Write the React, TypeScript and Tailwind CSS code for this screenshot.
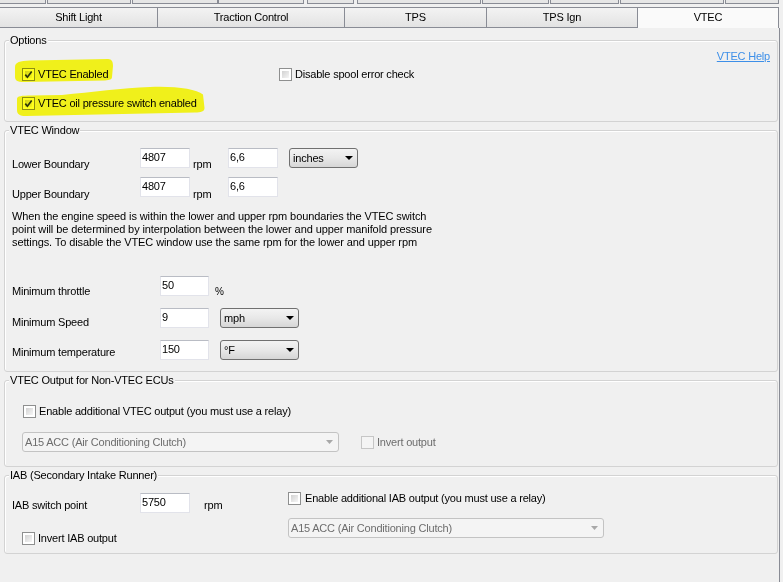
import React from "react";

function Check({ checked = false, disabled = false }: { checked?: boolean; disabled?: boolean }) {
  return (
    <span
      className={
        disabled
          ? "relative block h-[13px] w-[13px] shrink-0 border border-[#c6c6c6] bg-[#f4f4f4]"
          : "relative block h-[13px] w-[13px] shrink-0 border border-[#8e8f8f] bg-white"
      }
    >
      {!disabled && (
        <span className="absolute inset-[2px] bg-gradient-to-br from-[#d2d2d2] to-[#f6f6f6]" />
      )}
      {checked && (
        <svg className="absolute left-0 top-0" width="11" height="11" viewBox="0 0 11 11">
          <path d="M2.3 5.6 L4.4 8.2 L8.7 2.4" stroke="#2b3550" strokeWidth="1.7" fill="none" />
        </svg>
      )}
    </span>
  );
}

function Field({ className, children }: { className: string; children: React.ReactNode }) {
  return (
    <div
      className={
        "h-[20px] shrink-0 border border-[#e2e3ea] border-t-[#b9bcc4] bg-white pl-[1px] pt-[2px] leading-[13px] " +
        className
      }
    >
      {children}
    </div>
  );
}

function Combo({ className, children }: { className: string; children: React.ReactNode }) {
  return (
    <div
      className={
        "flex h-[20px] shrink-0 items-center justify-between rounded-[3px] border border-[#707070] bg-gradient-to-b from-[#f3f3f3] via-[#e8e8e8] to-[#d6d6d6] pl-[3px] pr-[4px] " +
        className
      }
    >
      <span className="leading-[13px]">{children}</span>
      <svg width="8" height="4" viewBox="0 0 8 4">
        <path d="M0 0H8L4 4Z" fill="#000" />
      </svg>
    </div>
  );
}

function DisabledCombo({ className }: { className: string }) {
  return (
    <div
      className={
        "flex h-[20px] shrink-0 items-center justify-between rounded-[3px] border border-[#c3c3c3] bg-[#f4f4f4] pl-[2px] pr-[5px] text-[#6d6d6d] " +
        className
      }
    >
      <span className="leading-[13px]">A15 ACC (Air Conditioning Clutch)</span>
      <svg width="7" height="4" viewBox="0 0 7 4">
        <path d="M0 0H7L3.5 4Z" fill="#a8a8a8" />
      </svg>
    </div>
  );
}

function Group({ title, className, children }: { title: string; className: string; children: React.ReactNode }) {
  return (
    <div className={"relative rounded-[3px] border border-[#d3d3d3] shadow-[inset_1px_1px_0_#ffffff] " + className}>
      <span className="absolute left-[4px] top-[-7px] bg-[#f0f0f0] px-[1px] leading-[13px]">{title}</span>
      {children}
    </div>
  );
}

export default function App() {
  return (
    <div className="relative h-[582px] w-[783px] overflow-hidden bg-[#f0f0f0] font-['Liberation_Sans',Arial,sans-serif] text-[11px] leading-[13px] tracking-[-0.2px] text-black">
      {/* upper tab row (cut off) */}
      <div className="flex h-[4px]">
        <div className="h-[4px] w-[46px] border-b border-r border-[#898c95] bg-[#e6e6e6]" />
        <div className="ml-[1px] h-[4px] w-[84px] border-x border-b border-[#898c95] bg-[#e6e6e6]" />
        <div className="ml-[1px] h-[4px] w-[86px] border-x border-b border-[#898c95] bg-[#e6e6e6]" />
        <div className="h-[4px] w-[86px] border-x border-b border-[#898c95] bg-[#e6e6e6]" />
        <div className="ml-[3px] h-[4px] w-[47px] border-x border-b border-[#898c95] bg-[#e6e6e6]" />
        <div className="ml-[3px] h-[4px] w-[124px] border-x border-b border-[#898c95] bg-[#e6e6e6]" />
        <div className="ml-[1px] h-[4px] w-[67px] border-x border-b border-[#898c95] bg-[#e6e6e6]" />
        <div className="ml-[1px] h-[4px] w-[69px] border-x border-b border-[#898c95] bg-[#e6e6e6]" />
        <div className="ml-[1px] h-[4px] w-[104px] border-x border-b border-[#898c95] bg-[#e6e6e6]" />
        <div className="ml-[1px] h-[4px] w-[54px] border-x border-b border-[#898c95] bg-[#e6e6e6]" />
      </div>

      {/* lower tab row */}
      <div className="mt-[3px] flex h-[21px]">
        <div className="flex h-[21px] w-[158px] items-center justify-center border-y border-r border-[#898c95] bg-gradient-to-b from-[#f3f3f3] to-[#e3e3e3]">
          Shift Light
        </div>
        <div className="flex h-[21px] w-[187px] items-center justify-center border-y border-r border-[#898c95] bg-gradient-to-b from-[#f3f3f3] to-[#e3e3e3]">
          Traction Control
        </div>
        <div className="flex h-[21px] w-[142px] items-center justify-center border-y border-r border-[#898c95] bg-gradient-to-b from-[#f3f3f3] to-[#e3e3e3]">
          TPS
        </div>
        <div className="flex h-[21px] w-[151px] items-center justify-center border-y border-r border-[#898c95] bg-gradient-to-b from-[#f3f3f3] to-[#e3e3e3]">
          TPS Ign
        </div>
        <div className="flex h-[21px] w-[141px] items-center justify-center border-r border-t border-[#898c95] bg-[#fafafa] pb-[1px]">
          VTEC
        </div>
      </div>

      {/* tab page */}
      <div className="h-[554px] w-[780px] border-r border-[#898c95] pl-[4px] pr-[1px] pt-[12px]">
        {/* Options */}
        <Group title="Options" className="h-[82px] w-[774px]">
          <div className="flex justify-end pr-[7px] pt-[9px]">
            <span className="text-[#3d8fe8] underline">VTEC Help</span>
          </div>
          <div className="mt-[5px] flex h-[13px] items-center pl-[17px]">
            <div className="flex w-[257px] items-center gap-[3px]">
              <Check checked />
              <span>VTEC Enabled</span>
            </div>
            <div className="flex items-center gap-[3px]">
              <Check />
              <span>Disable spool error check</span>
            </div>
          </div>
          <div className="mt-[16px] flex h-[13px] items-center gap-[3px] pl-[17px]">
            <Check checked />
            <span>VTEC oil pressure switch enabled</span>
          </div>
        </Group>

        {/* VTEC Window */}
        <Group title="VTEC Window" className="mt-[8px] h-[242px] w-[774px]">
          <div className="pl-[7px] pt-[17px]">
            <div className="flex h-[20px] items-start">
              <span className="w-[128px] shrink-0 pt-[10px]">Lower Boundary</span>
              <Field className="w-[50px]">4807</Field>
              <span className="w-[38px] shrink-0 pl-[3px] pt-[10px]">rpm</span>
              <Field className="w-[50px]">6,6</Field>
              <Combo className="ml-[11px] w-[69px]">inches</Combo>
            </div>
            <div className="mt-[9px] flex h-[20px] items-start">
              <span className="w-[128px] shrink-0 pt-[11px]">Upper Boundary</span>
              <Field className="w-[50px]">4807</Field>
              <span className="w-[38px] shrink-0 pl-[3px] pt-[11px]">rpm</span>
              <Field className="w-[50px]">6,6</Field>
            </div>
            <p className="mt-[13px] leading-[13px] tracking-[-0.1px]">
              When the engine speed is within the lower and upper rpm boundaries the VTEC switch
              <br />
              point will be determined by interpolation between the lower and upper manifold pressure
              <br />
              settings. To disable the VTEC window use the same rpm for the lower and upper rpm
            </p>
            <div className="mt-[27px] flex h-[20px] items-start">
              <span className="w-[148px] shrink-0 pt-[9px]">Minimum throttle</span>
              <Field className="w-[49px]">50</Field>
              <span className="pl-[6px] pt-[9px] text-[10px]">%</span>
            </div>
            <div className="mt-[12px] flex h-[20px] items-start">
              <span className="w-[148px] shrink-0 pt-[8px]">Minimum Speed</span>
              <Field className="w-[49px]">9</Field>
              <Combo className="ml-[11px] w-[79px]">mph</Combo>
            </div>
            <div className="mt-[12px] flex h-[20px] items-start">
              <span className="w-[148px] shrink-0 pt-[6px]">Minimum temperature</span>
              <Field className="w-[49px]">150</Field>
              <Combo className="ml-[11px] w-[79px]">°F</Combo>
            </div>
          </div>
        </Group>

        {/* VTEC Output */}
        <Group title="VTEC Output for Non-VTEC ECUs" className="mt-[8px] h-[87px] w-[774px]">
          <div className="mt-[24px] flex h-[13px] items-center gap-[3px] pl-[18px]">
            <Check />
            <span>Enable additional VTEC output (you must use a relay)</span>
          </div>
          <div className="mt-[14px] flex h-[20px] items-center pl-[17px]">
            <DisabledCombo className="w-[317px]" />
            <div className="ml-[22px] flex items-center gap-[3px]">
              <Check disabled />
              <span className="text-[#6d6d6d]">Invert output</span>
            </div>
          </div>
        </Group>

        {/* IAB */}
        <Group title="IAB (Secondary Intake Runner)" className="mt-[8px] flex h-[79px] w-[774px]">
          <div className="w-[283px] shrink-0 pl-[7px] pt-[17px]">
            <div className="flex h-[20px] items-start">
              <span className="w-[128px] shrink-0 pt-[6px]">IAB switch point</span>
              <Field className="w-[50px]">5750</Field>
              <span className="pl-[14px] pt-[6px]">rpm</span>
            </div>
            <div className="mt-[19px] flex h-[13px] items-center gap-[3px] pl-[10px]">
              <Check />
              <span>Invert IAB output</span>
            </div>
          </div>
          <div className="pt-[16px]">
            <div className="flex h-[13px] items-center gap-[4px]">
              <Check />
              <span>Enable additional IAB output (you must use a relay)</span>
            </div>
            <DisabledCombo className="mt-[13px] w-[316px]" />
          </div>
        </Group>
      </div>

      {/* highlighter marks over the options */}
      <svg
        className="pointer-events-none absolute left-0 top-0 mix-blend-multiply"
        width="783"
        height="130"
        viewBox="0 0 783 130"
      >
        <path
          d="M15 67 C15 62 20 61 30 60.5 L108 59 C112 59 113 62 113 66 L112 77 C112 79.5 110 80 105 80.5 L24 82 C17 82 15 80 15 77 Z"
          fill="#ffff1c"
        />
        <path
          d="M17 99 C17 96 21 95.5 32 95.5 L62 95 C92 92 122 88 150 87 C176 86 196 89 203 94.5 L204.5 108 C204.5 111.5 201 112.5 195 112.5 L26 116 C19.5 116 17 114 17 110 Z"
          fill="#ffff1c"
        />
      </svg>
    </div>
  );
}
